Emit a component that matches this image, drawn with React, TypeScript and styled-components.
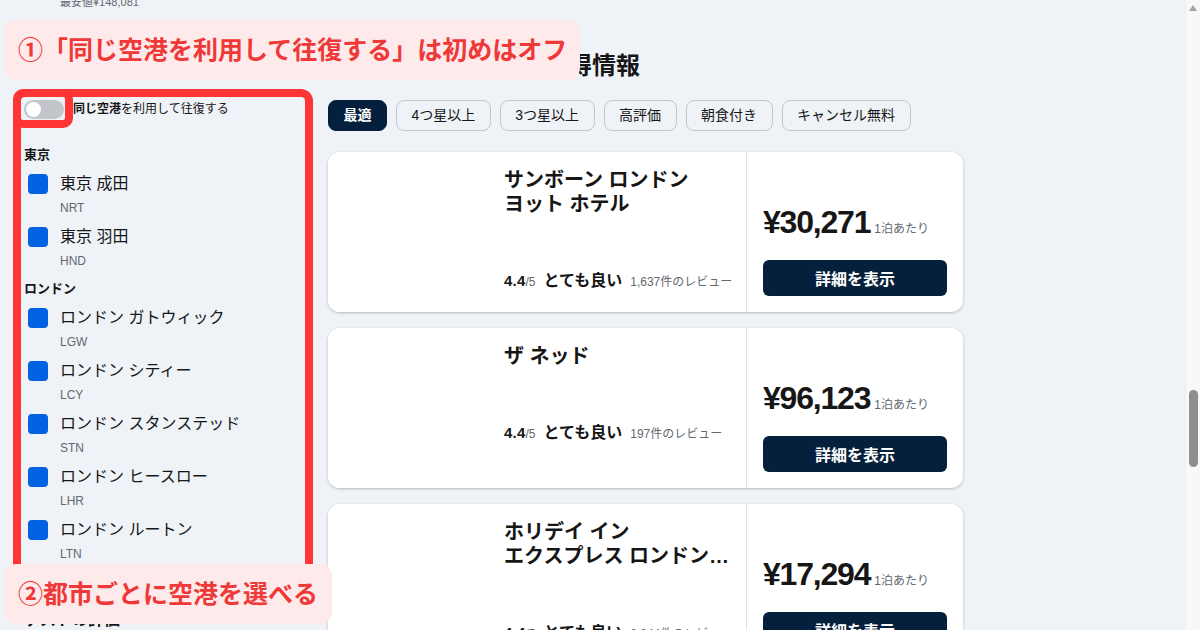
import React from "react";
import styled, { createGlobalStyle } from "styled-components";

const GlobalStyle = createGlobalStyle`
  html, body {
    margin: 0;
    padding: 0;
    background: #eff2f7;
    overflow: hidden;
  }
  body {
    font-family: "Liberation Sans", "Noto Sans CJK JP", sans-serif;
    color: #161616;
  }
  * { box-sizing: border-box; }
`;

const Page = styled.div`
  position: relative;
  width: 1200px;
  height: 630px;
  overflow: hidden;
  display: flex;
  align-items: flex-start;
  column-gap: 14px;
  padding-left: 24px;
`;

/* ---------- sidebar ---------- */

const Sidebar = styled.aside`
  width: 290px;
  flex: none;
  display: flex;
  flex-direction: column;
`;

const TopNote = styled.div`
  margin-top: -5px;
  padding-left: 36px;
  font-size: 11px;
  line-height: 14px;
  color: #626971;
`;

const ToggleRow = styled.label`
  margin-top: 91px;
  display: flex;
  align-items: center;
  gap: 9px;
  height: 19px;
  font-size: 12px;
  color: #161616;
`;

const ToggleText = styled.span`
  margin-top: -4px;
`;

const Switch = styled.span`
  position: relative;
  width: 40px;
  height: 19px;
  border-radius: 10px;
  background: #c2c5ca;
  flex: none;

  &::after {
    content: "";
    position: absolute;
    left: 2px;
    top: 2px;
    width: 15px;
    height: 15px;
    border-radius: 50%;
    background: #ffffff;
  }
`;

const Strong = styled.b`
  font-weight: 700;
`;

const CityGroup = styled.section<{ $first?: boolean }>`
  margin-top: ${(p) => (p.$first ? "27px" : "11px")};
  display: flex;
  flex-direction: column;
`;

const CityTitle = styled.h3`
  margin: 0;
  font-size: 13px;
  line-height: 18px;
  font-weight: 700;
`;

const AirportList = styled.ul`
  list-style: none;
  margin: 10px 0 0;
  padding: 0;
  display: flex;
  flex-direction: column;
  gap: 11px;
`;

const Airport = styled.li`
  display: grid;
  grid-template-columns: 20px 1fr;
  column-gap: 12px;
  padding-left: 4px;
`;

const Check = styled.span`
  width: 20px;
  height: 20px;
  border-radius: 4px;
  background: #0062e3;
`;

const AirportName = styled.span`
  font-size: 16px;
  line-height: 20px;
  color: #161616;
`;

const AirportCode = styled.span`
  grid-column: 2;
  margin-top: 6px;
  font-size: 12px;
  line-height: 16px;
  color: #626971;
`;

const SideHeading = styled.h3`
  margin: 48px 0 0;
  font-size: 16px;
  line-height: 20px;
  font-weight: 700;
`;

/* ---------- main column ---------- */

const Main = styled.main`
  width: 635px;
  flex: none;
  display: flex;
  flex-direction: column;
`;

const Heading = styled.h1`
  margin: 49px 0 0;
  font-size: 24px;
  line-height: 30px;
  font-weight: 700;
  font-family: "Noto Sans CJK JP", sans-serif;
`;

const Chips = styled.div`
  margin-top: 21px;
  display: flex;
  gap: 9px;
`;

const Chip = styled.button<{ $active?: boolean }>`
  height: 31px;
  padding: 0 14.5px;
  border-radius: 8px;
  border: 1px solid ${(p) => (p.$active ? "#05203c" : "#c1c7cf")};
  background: ${(p) => (p.$active ? "#05203c" : "transparent")};
  color: ${(p) => (p.$active ? "#ffffff" : "#161616")};
  font-family: "Liberation Sans", "Noto Sans CJK JP", sans-serif;
  font-size: 14px;
  font-weight: ${(p) => (p.$active ? 700 : 400)};
  line-height: 29px;
`;

const Cards = styled.div`
  margin-top: 21px;
  display: flex;
  flex-direction: column;
  gap: 16px;
`;

const Card = styled.article`
  height: 160px;
  flex: none;
  display: grid;
  grid-template-columns: 160px 1fr 217px;
  background: #ffffff;
  border-radius: 12px;
  box-shadow: 0 1px 3px rgba(37, 32, 31, 0.28);
  overflow: hidden;
`;

const Photo = styled.div`
  background: #ffffff;
`;

const Body = styled.div`
  padding: 16px 16px 0;
  display: flex;
  flex-direction: column;
  min-width: 0;
`;

const HotelName = styled.h2`
  margin: 0;
  font-size: 20px;
  line-height: 24px;
  font-weight: 700;
  word-break: keep-all;
  display: -webkit-box;
  -webkit-line-clamp: 2;
  -webkit-box-orient: vertical;
  overflow: hidden;
`;

const Rating = styled.div`
  margin-top: 55px;
  display: flex;
  align-items: baseline;
  gap: 8px;
  line-height: 20px;
  white-space: nowrap;
`;

const Score = styled.span`
  font-size: 15px;
  font-weight: 700;
  letter-spacing: 0.2px;

  small {
    font-size: 12px;
    font-weight: 400;
    color: #626971;
    letter-spacing: 0;
  }
`;

const Verdict = styled.span`
  font-size: 16px;
  font-weight: 700;
`;

const Reviews = styled.span`
  font-size: 12px;
  color: #626971;
`;

const Side = styled.div`
  border-left: 1px solid #e0e3e8;
  padding: 0 16px 16px;
  display: flex;
  flex-direction: column;
  justify-content: flex-end;
  gap: 20px;
`;

const PriceRow = styled.div`
  display: flex;
  align-items: baseline;
  gap: 4px;
  white-space: nowrap;
`;

const Price = styled.span`
  font-size: 32px;
  line-height: 36px;
  font-weight: 700;
  letter-spacing: -1.2px;
`;

const PerNight = styled.span`
  font-size: 12px;
  color: #626971;
`;

const DetailButton = styled.button`
  height: 36px;
  width: 100%;
  border: none;
  border-radius: 6px;
  background: #05203c;
  color: #ffffff;
  font-family: "Liberation Sans", "Noto Sans CJK JP", sans-serif;
  font-size: 16px;
  font-weight: 700;
`;

/* ---------- scrollbar ---------- */

const ScrollTrack = styled.div`
  position: absolute;
  top: 0;
  right: 0;
  width: 15px;
  height: 630px;
  background: #f8f8f8;
  border-left: 1px solid #eeeeee;
`;

const ScrollArrow = styled.span`
  position: absolute;
  left: 3px;
  top: 5px;
  width: 0;
  height: 0;
  border-left: 4px solid transparent;
  border-right: 4px solid transparent;
  border-bottom: 6px solid #a3a3a3;
`;

const ScrollThumb = styled.span`
  position: absolute;
  left: 3px;
  top: 390px;
  width: 9px;
  height: 77px;
  border-radius: 5px;
  background: #8e8e8e;
`;

/* ---------- callouts laid over the page ---------- */

const Callout = styled.div<{ $left: number; $top: number; $width: number }>`
  position: absolute;
  left: ${(p) => p.$left}px;
  top: ${(p) => p.$top}px;
  width: ${(p) => p.$width}px;
  height: 60px;
  border-radius: 12px;
  background: #feeaea;
  display: flex;
  align-items: center;
  padding: 0 0 5px 14px;
  font-family: "Noto Sans CJK JP", sans-serif;
  font-size: 25px;
  font-weight: 700;
  color: #ef3838;
  white-space: nowrap;
`;

const Frame = styled.div<{ $width: number; $height: number; $radius: number }>`
  position: absolute;
  left: 13px;
  top: 89px;
  width: ${(p) => p.$width}px;
  height: ${(p) => p.$height}px;
  border: 8px solid #ff3434;
  border-radius: ${(p) => p.$radius}px;
`;

type Hotel = {
  name: string;
  score: string;
  reviews: string;
  price: string;
};

const hotels: Hotel[] = [
  { name: "サンボーン ロンドン ヨット ホテル", score: "4.4", reviews: "1,637件のレビュー", price: "¥30,271" },
  { name: "ザ ネッド", score: "4.4", reviews: "197件のレビュー", price: "¥96,123" },
  { name: "ホリデイ イン エクスプレス ロンドン ストラトフォード", score: "4.4", reviews: "2,044件のレビュー", price: "¥17,294" },
];

const cities = [
  {
    city: "東京",
    airports: [
      { name: "東京 成田", code: "NRT" },
      { name: "東京 羽田", code: "HND" },
    ],
  },
  {
    city: "ロンドン",
    airports: [
      { name: "ロンドン ガトウィック", code: "LGW" },
      { name: "ロンドン シティー", code: "LCY" },
      { name: "ロンドン スタンステッド", code: "STN" },
      { name: "ロンドン ヒースロー", code: "LHR" },
      { name: "ロンドン ルートン", code: "LTN" },
    ],
  },
];

const filters = ["最適", "4つ星以上", "3つ星以上", "高評価", "朝食付き", "キャンセル無料"];

export default function App() {
  return (
    <>
      <GlobalStyle />
      <Page>
        <Sidebar>
          <TopNote>最安値¥148,081</TopNote>
          <ToggleRow>
            <Switch />
            <ToggleText>
              <Strong>同じ空港</Strong>を利用して往復する
            </ToggleText>
          </ToggleRow>
          {cities.map((group, i) => (
            <CityGroup key={group.city} $first={i === 0}>
              <CityTitle>{group.city}</CityTitle>
              <AirportList>
                {group.airports.map((a) => (
                  <Airport key={a.code}>
                    <Check />
                    <AirportName>{a.name}</AirportName>
                    <AirportCode>{a.code}</AirportCode>
                  </Airport>
                ))}
              </AirportList>
            </CityGroup>
          ))}
          <SideHeading>ゲストの評価</SideHeading>
        </Sidebar>

        <Main>
          <Heading>ロンドンのホテルのお得情報</Heading>
          <Chips>
            {filters.map((f, i) => (
              <Chip key={f} $active={i === 0}>
                {f}
              </Chip>
            ))}
          </Chips>
          <Cards>
            {hotels.map((h) => (
              <Card key={h.name}>
                <Photo />
                <Body>
                  <HotelName>{h.name}</HotelName>
                  <Rating>
                    <Score>
                      {h.score}
                      <small>/5</small>
                    </Score>
                    <Verdict>とても良い</Verdict>
                    <Reviews>{h.reviews}</Reviews>
                  </Rating>
                </Body>
                <Side>
                  <PriceRow>
                    <Price>{h.price}</Price>
                    <PerNight>1泊あたり</PerNight>
                  </PriceRow>
                  <DetailButton>詳細を表示</DetailButton>
                </Side>
              </Card>
            ))}
          </Cards>
        </Main>

        <ScrollTrack>
          <ScrollArrow />
          <ScrollThumb />
        </ScrollTrack>

        <Frame $width={300} $height={520} $radius={12} />
        <Frame $width={60} $height={39} $radius={10} />
        <Callout $left={4} $top={20} $width={576}>
          ①「同じ空港を利用して往復する」は初めはオフ
        </Callout>
        <Callout $left={4} $top={564} $width={328}>
          ②都市ごとに空港を選べる
        </Callout>
      </Page>
    </>
  );
}
